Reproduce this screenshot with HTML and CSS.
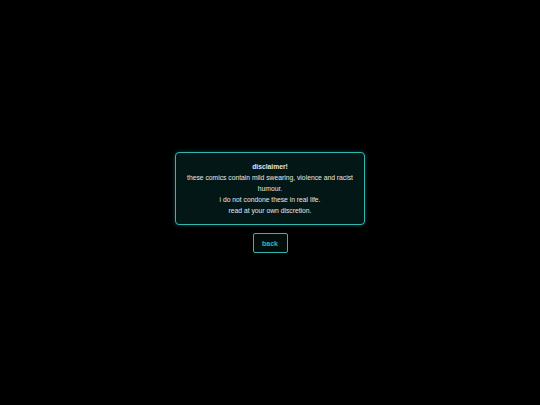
FILE: index.html
```html
<!DOCTYPE html>
<html>
<head>
<meta charset="utf-8">
<link rel="stylesheet" href="styles.css">
</head>
<body>
<main class="page">
  <section class="notice">
    <p class="title">disclaimer!</p>
    <p>these comics contain mild swearing, violence and racist humour.</p>
    <p>i do not condone these in real life.</p>
    <p>read at your own discretion.</p>
  </section>
  <button class="back">back</button>
</main>
</body>
</html>
```
FILE: styles.css
```css
html, body {
  margin: 0;
  padding: 0;
  background: #000;
  height: 100%;
}
.page {
  height: 405px;
  display: flex;
  flex-direction: column;
  align-items: center;
  justify-content: center;
  gap: 8px;
  font-family: "Liberation Sans", Arial, sans-serif;
}
.notice {
  box-sizing: border-box;
  width: 190px;
  padding: 8px 8px;
  border: 1px solid #2fb8b2;
  border-radius: 4px;
  background: #031816;
  color: #e6e6e6;
  text-align: center;
  font-size: 6.75px;
  line-height: 11px;
  box-shadow: 0 0 4px rgba(47, 184, 178, 0.35);
}
.notice p {
  margin: 0;
}
.notice .title {
  font-weight: bold;
}
.back {
  box-sizing: border-box;
  width: 35px;
  height: 20px;
  padding: 0;
  border: 1px solid #2fb8b2;
  border-radius: 2px;
  background: #020c0b;
  color: #2fb8b2;
  font-family: "Liberation Sans", Arial, sans-serif;
  font-weight: bold;
  font-size: 7px;
}
```
